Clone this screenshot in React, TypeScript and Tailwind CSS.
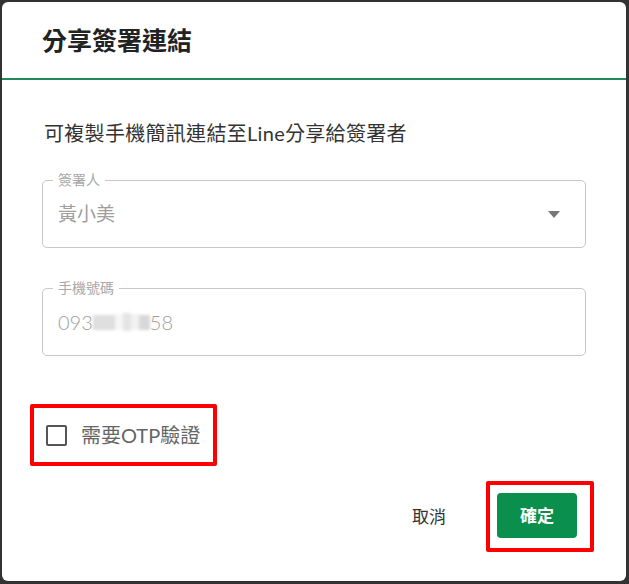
import { ReactNode } from "react";

const fontStack = "font-['Lato','Noto_Sans_CJK_TC',sans-serif]";

function OutlinedField({ label, children }: { label: string; children: ReactNode }) {
  return (
    <div className="relative h-[68px] rounded-[5px] border border-[#c8c8c8] flex items-center px-[15px]">
      <span className="absolute -top-[10px] left-[10px] bg-white px-[5px] text-[14px] leading-[18px] text-[#a8a8a8]">
        {label}
      </span>
      {children}
    </div>
  );
}

export default function App() {
  return (
    <div className={`w-[629px] h-[584px] bg-[#333333] pt-[2px] pl-[2px] pr-[3px] ${fontStack}`}>
      <div className="h-[579px] bg-white rounded-[6px] flex flex-col">
        <div className="h-[78px] border-b-2 border-[#1f8a58] px-[40px] flex items-center">
          <h2 className="text-[25px] font-bold text-[#222] leading-none">分享簽署連結</h2>
        </div>

        <div className="px-[40px] pt-[39px]">
          <p className="text-[20px] leading-[28px] text-[#333] pl-[2px] tracking-[0.3px]">
            可複製手機簡訊連結至Line分享給簽署者
          </p>

          <div className="mt-[33px]">
            <OutlinedField label="簽署人">
              <span className="flex-1 text-[19px] text-[#9e9e9e]">黃小美</span>
              <svg width="12" height="7" viewBox="0 0 12 7" className="mr-[10px]">
                <path d="M0 0 L12 0 L6 7 Z" fill="#777" />
              </svg>
            </OutlinedField>
          </div>

          <div className="mt-[40px]">
            <OutlinedField label="手機號碼">
              <span className="flex items-center text-[20px] font-light text-[#9e9e9e]">
                093
                <span className="flex items-center h-[20px] blur-[1.5px]">
                  <span className="w-[22px] h-[15px] bg-[#dedede]"></span>
                  <span className="w-[8px] h-[16px] bg-[#f6f6f6]"></span>
                  <span className="w-[8px] h-[18px] bg-[#e4e4e4]"></span>
                  <span className="w-[8px] h-[16px] bg-[#f2f2f2]"></span>
                  <span className="w-[11px] h-[15px] bg-[#d8d8d8]"></span>
                </span>
                58
              </span>
            </OutlinedField>
          </div>

          <div className="mt-[48px] -ml-[12px] w-fit border-4 border-[#ff0000] rounded-[2px] h-[62px] flex items-center pl-[12px] pr-[13px]">
            <div className="w-[21px] h-[21px] border-[2.5px] border-[#555] rounded-[2px]"></div>
            <span className="ml-[14px] text-[20px] text-[#666]">需要OTP驗證</span>
          </div>

          <div className="mt-[15px] -mr-[8px] flex items-center justify-end">
            <button className="text-[17px] text-[#333] px-[2px]">取消</button>
            <div className="ml-[38px] border-4 border-[#ff0000] rounded-[2px] pl-[7px] pr-[13px] pt-[8px] pb-[10px]">
              <button className="w-[80px] h-[45px] rounded-[4px] bg-[#0b8f4c] text-white text-[17px] font-bold">
                確定
              </button>
            </div>
          </div>
        </div>
      </div>
    </div>
  );
}
